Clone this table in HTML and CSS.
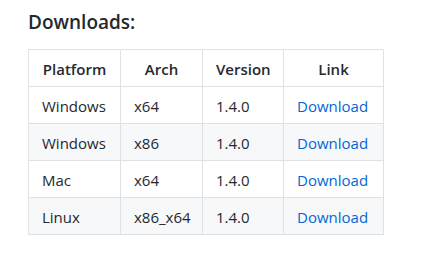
FILE: index.html
```html
<!DOCTYPE html>
<html lang="en">
<head>
    <meta charset="UTF-8">
    <meta name="viewport" content="width=device-width, initial-scale=1.0">
    <title>Downloads</title>
    <link rel="stylesheet" href="styles.css">
</head>
<body>

<div class="markdown-body">
    <h3>Downloads:</h3>

    <!-- Release table -->
    <table>
        <colgroup>
            <col class="col-platform">
            <col class="col-arch">
            <col class="col-version">
            <col class="col-link">
        </colgroup>
        <thead>
            <tr>
                <th>Platform</th>
                <th>Arch</th>
                <th>Version</th>
                <th>Link</th>
            </tr>
        </thead>
        <tbody>
            <tr>
                <td>Windows</td>
                <td>x64</td>
                <td>1.4.0</td>
                <td><a href="#">Download</a></td>
            </tr>
            <tr>
                <td>Windows</td>
                <td>x86</td>
                <td>1.4.0</td>
                <td><a href="#">Download</a></td>
            </tr>
            <tr>
                <td>Mac</td>
                <td>x64</td>
                <td>1.4.0</td>
                <td><a href="#">Download</a></td>
            </tr>
            <tr>
                <td>Linux</td>
                <td>x86_x64</td>
                <td>1.4.0</td>
                <td><a href="#">Download</a></td>
            </tr>
        </tbody>
    </table>
</div>

</body>
</html>
```

FILE: styles.css
```css
body {
    margin: 0;
    background-color: #fff;
    color: #24292e;
    font-family: "Open Sans", "Noto Sans", Arial, sans-serif;
    font-size: 15px;
    line-height: 24px;
}
.markdown-body {
    padding: 0 28px;
}
h3 {
    font-size: 19px;
    font-weight: 600;
    line-height: 24px;
    margin: 10px 0 15px;
}
table {
    border-collapse: collapse;
    border-spacing: 0;
    table-layout: fixed;
    width: 355px;
}
.col-platform {
    width: 92px;
}
.col-arch {
    width: 82px;
}
.col-version {
    width: 81px;
}
.col-link {
    width: 100px;
}
th, td {
    border: 1px solid #dfe2e5;
    padding: 7px 13px 5px;
    text-align: left;
    white-space: nowrap;
}
th {
    font-weight: 600;
    text-align: center;
}
tbody tr:nth-child(2n) {
    background-color: #f6f8fa;
}
a {
    color: #0366d6;
    text-decoration: none;
}
```
